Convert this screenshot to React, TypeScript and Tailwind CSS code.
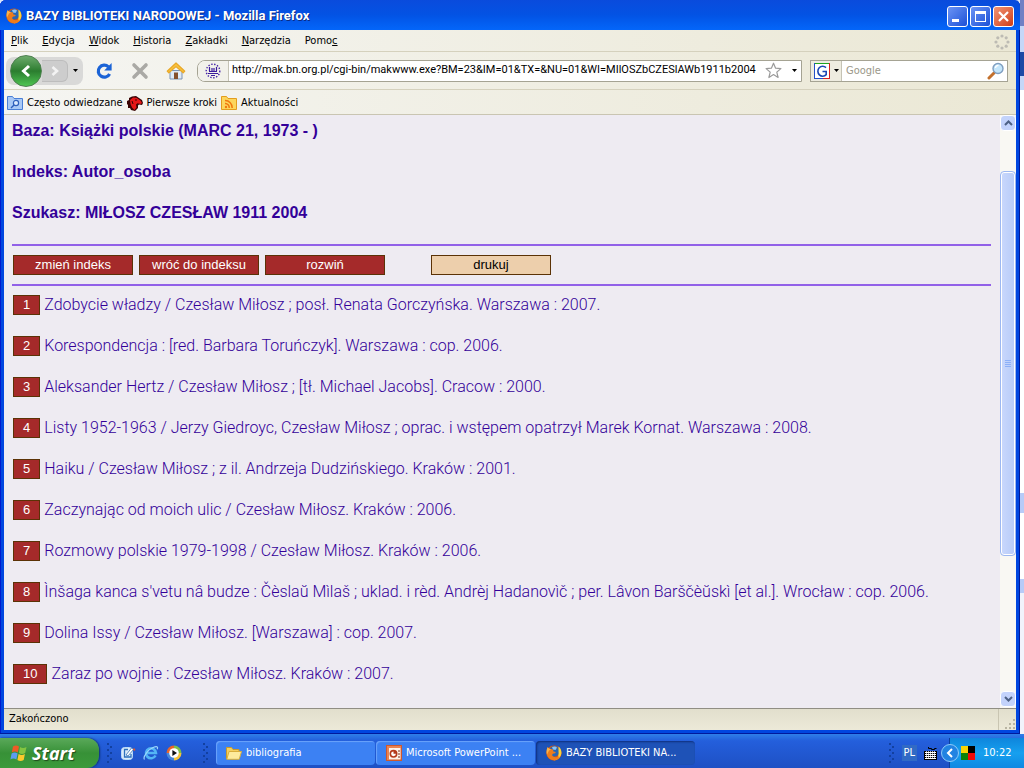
import React from 'react';

const menuItems = [
    { before: '', key: 'P', after: 'lik' },
    { before: '', key: 'E', after: 'dycja' },
    { before: '', key: 'W', after: 'idok' },
    { before: '', key: 'H', after: 'istoria' },
    { before: '', key: 'Z', after: 'akładki' },
    { before: '', key: 'N', after: 'arzędzia' },
    { before: 'Pomo', key: 'c', after: '' },
];

const books = [
    'Zdobycie władzy / Czesław Miłosz ; posł. Renata Gorczyńska. Warszawa : 2007.',
    'Korespondencja : [red. Barbara Toruńczyk]. Warszawa : cop. 2006.',
    'Aleksander Hertz / Czesław Miłosz ; [tł. Michael Jacobs]. Cracow : 2000.',
    'Listy 1952-1963 / Jerzy Giedroyc, Czesław Miłosz ; oprac. i wstępem opatrzył Marek Kornat. Warszawa : 2008.',
    'Haiku / Czesław Miłosz ; z il. Andrzeja Dudzińskiego. Kraków : 2001.',
    'Zaczynając od moich ulic / Czesław Miłosz. Kraków : 2006.',
    'Rozmowy polskie 1979-1998 / Czesław Miłosz. Kraków : 2006.',
    "Ìnšaga kanca s'vetu nâ budze : Čèslaŭ Mìlaš ; uklad. i rèd. Andrèj Hadanovìč ; per. Lâvon Barščèŭskì [et al.]. Wrocław : cop. 2006.",
    'Dolina Issy / Czesław Miłosz. [Warszawa] : cop. 2007.',
    'Zaraz po wojnie : Czesław Miłosz. Kraków : 2007.',
];

const FirefoxIcon = () => (
    <svg width="16" height="16" viewBox="0 0 16 16" className="shrink-0">
        <circle cx="8" cy="8" r="7.6" fill="#d9560e" />
        <circle cx="8.4" cy="6.2" r="5.2" fill="#2765b4" />
        <path d="M6 2c2-1 4-.6 5 .6L9.500 5 7 4.600z" fill="#8cc4f2" />
        <path d="M12.600 1.600c2.600 2 3.600 5.600 2.200 9-1.400 3-4.200 4.800-7.200 4.800 3.600-1.400 5.200-4 5-7.400-.1-2.400-.2-4.400 0-6.400z" fill="#fbd23a" />
        <path d="M1.600 2.200C.2 5 .2 9.200 1.800 11.800 3.600 14.600 7 15.800 10 15c2-.6 3-2 3.400-4-2.400 1.600-5.400 1.600-6.800 0-.8-1-.2-2.200 1-2.400l1.600-.4.6-1.200-2.400-.6-.4-2-2.200-.4L3 3.400z" fill="#ee7c1b" />
        <path d="M1.600 2.200C.4 4.600.4 7.600 1 9.600l2-4 2-1.200-2-1z" fill="#fbb44a" />
    </svg>
);

const StopIcon = () => (
    <svg width="18" height="18" viewBox="0 0 18 18">
        <path d="M3 3l12 12M15 3L3 15" stroke="#aaa9a5" strokeWidth="3.600" strokeLinecap="round" />
    </svg>
);

const ReloadIcon = () => (
    <svg width="18" height="18" viewBox="0 0 18 18">
        <path d="M13.400 4.800A6 6 0 1 0 14.600 12" fill="none" stroke="#1b63d6" strokeWidth="3.200" />
        <path d="M16.600 1v7.400H9.200z" fill="#1b63d6" />
    </svg>
);

const HomeIcon = () => (
    <svg width="20" height="18" viewBox="0 0 20 18">
        <path d="M4 8.500h12V17H4z" fill="#dfeaf6" stroke="#7b93b3" />
        <path d="M8 10.500h4V17H8z" fill="#85502c" />
        <path d="M10 1L1.200 9.200l1.600 1.600L10 4.600l7.200 6.200 1.600-1.600z" fill="#f9c23c" stroke="#e9a828" strokeWidth="1.200" strokeLinejoin="round" />
    </svg>
);

const LibraryIcon = () => (
    <svg width="16" height="16" viewBox="0 0 16 16">
        <circle cx="8" cy="8" r="6.800" fill="none" stroke="#4524a6" strokeWidth="1.400" strokeDasharray="1.400 1.600" />
        <path d="M4.500 4v4M7 5v3M9 5v3M11.500 4v4" stroke="#3a1a9c" strokeWidth="1.200" />
        <path d="M4 8.500h8M3 10.500h10M6 12.500h4" stroke="#3a1a9c" strokeWidth="1.200" />
    </svg>
);

const FolderSearchIcon = () => (
    <svg width="16" height="14" viewBox="0 0 16 14">
        <path d="M.5.500h5l1.500 2h8.500v11H.5z" fill="#a9c9f6" stroke="#4a7fd6" />
        <circle cx="9" cy="7" r="2.600" fill="#dcebff" stroke="#2e5fbb" strokeWidth="1.200" />
        <path d="M7 9l-3 3" stroke="#2e5fbb" strokeWidth="1.500" />
    </svg>
);

const DragonIcon = () => (
    <svg width="16" height="15" viewBox="0 0 16 15">
        <path d="M0 5l2-1 0-2 3-1.500 4-.5 3 2 3 2 1 3-1 2-3-.5-1 1 0 2.500-3 3-4-1-1-2-2 0 0-3-1-1z" fill="#3a0404" />
        <path d="M3 4l3-2.500 3.500.3 4 2.700 1.500 2.500-1.500 1-3-.8-1.500 1.300.5 3-2 2.500L5 11.500 3.500 8z" fill="#e51616" />
        <path d="M8 4h2M5 5l1 3" stroke="#3a0404" />
    </svg>
);

const FeedFolderIcon = () => (
    <svg width="16" height="14" viewBox="0 0 16 14">
        <path d="M.5.500h5l1.500 2h8.500v11H.5z" fill="#fcd65c" stroke="#e39d1d" />
        <circle cx="5" cy="11" r="1.200" fill="#f0780e" />
        <path d="M4 7.500A4 4 0 0 1 8.200 12M4 4.600A7 7 0 0 1 11.200 12" fill="none" stroke="#f0780e" strokeWidth="1.500" />
    </svg>
);

const ThrobberIcon = () => (
    <svg width="16" height="16" viewBox="0 0 16 16" className="shrink-0 fill-[#bdbbb3]">
        <circle cx="8" cy="2" r="1.600" />
        <circle cx="12.200" cy="3.800" r="1.600" />
        <circle cx="14" cy="8" r="1.600" />
        <circle cx="12.200" cy="12.200" r="1.600" />
        <circle cx="8" cy="14" r="1.600" />
        <circle cx="3.800" cy="12.200" r="1.600" />
        <circle cx="2" cy="8" r="1.600" />
        <circle cx="3.800" cy="3.800" r="1.600" />
    </svg>
);

const StarIcon = () => (
    <svg width="17" height="17" viewBox="0 0 17 17">
        <path d="M8.500 1.200l2.100 5 5.300.4-4.100 3.500 1.300 5.400-4.600-2.900-4.600 2.900 1.300-5.400L1.100 6.600l5.300-.4z" fill="#fff" stroke="#9b9b9b" strokeWidth="1.200" strokeLinejoin="round" />
    </svg>
);

const CaretIcon = () => (
    <svg width="5" height="3" viewBox="0 0 5 3">
        <path d="M0 0h5L2.500 3z" fill="#000" />
    </svg>
);

const GoogleIcon = () => (
    <svg width="16" height="16" viewBox="0 0 16 16">
        <path d="M0 0h16v16H0z" fill="#fff" />
        <path d="M0 .5h16" stroke="#1fa51f" />
        <path d="M.5 0v16M0 15.500h10" stroke="#2450c8" />
        <path d="M15.500 0v16M9 15.500h7" stroke="#d92020" />
        <path d="M12 4.600A4.800 5 0 1 0 12.200 11.600V8.500H8.500" fill="none" stroke="#1b48b5" strokeWidth="1.600" />
    </svg>
);

const MagnifierIcon = () => (
    <svg width="18" height="18" viewBox="0 0 18 18">
        <path d="M7 11l-5 5" stroke="#c3702c" strokeWidth="3" strokeLinecap="round" />
        <circle cx="11" cy="6.500" r="5" fill="#c4e6fb" stroke="#7f9ec0" strokeWidth="1.400" />
        <path d="M8.500 6a2.600 2.600 0 0 1 3-2.500" fill="none" stroke="#fff" strokeWidth="1.400" />
    </svg>
);

const WindowsFlag = () => (
    <svg width="18" height="18" viewBox="0 0 18 18">
        <path d="M3 2.500c2-1.300 4-1.300 6 0L7.800 8.400c-2-1.200-4-1.200-6 0z" fill="#ee5a26" />
        <path d="M10 3c2 1.300 4 1.300 6.500 0l-1.300 6c-2.200 1.200-4.200 1.200-6.300 0z" fill="#83c441" />
        <path d="M1.600 9.400c2-1.200 4-1.200 6 0l-1.200 6c-2-1.300-4-1.300-6 0z" fill="#5c9cf0" />
        <path d="M8.600 10c2 1.200 4.200 1.200 6.300 0l-1.200 6c-2.200 1.200-4.200 1.200-6.300 0z" fill="#fbc92c" />
    </svg>
);

const DesktopIcon = () => (
    <svg width="16" height="16" viewBox="0 0 16 16">
        <rect x="1.500" y="2.500" width="11" height="12" rx="3" fill="#dcecfb" stroke="#b9dbf8" />
        <path d="M8 4.500H4.500v7.500H11V9" fill="none" stroke="#2b70bd" strokeWidth="1.300" />
        <path d="M6 10l5.500-7 2 1.500L8 11z" fill="#fff" stroke="#3471b2" strokeWidth=".8" />
        <path d="M13 4l1.200-1 1.300 2-1.500 1z" fill="#e2582c" />
    </svg>
);

const ExplorerIcon = () => (
    <svg width="16" height="16" viewBox="0 0 16 16">
        <path d="M12.500 10.500A5 5 0 1 1 13 8H4.500" fill="none" stroke="#53b6f5" strokeWidth="2.600" />
        <path d="M1.500 14.500C-.5 12 5 4 12 1.800c2.500-.6 3 .4 2.200 2.400" fill="none" stroke="#9cd7fb" strokeWidth="1.200" />
    </svg>
);

const MediaIcon = () => (
    <svg width="16" height="16" viewBox="0 0 16 16">
        <path d="M8 8V.500A7.500 7.500 0 0 0 .5 8z" fill="#e9662b" />
        <path d="M8 8h7.500A7.500 7.500 0 0 0 8 .5z" fill="#7cc04a" />
        <path d="M8 8H.5A7.500 7.500 0 0 0 8 15.500z" fill="#4787db" />
        <path d="M8 8v7.500A7.500 7.500 0 0 0 15.500 8z" fill="#f3c23a" />
        <circle cx="8" cy="8" r="4.800" fill="#fff" />
        <path d="M6.400 5v6l4.600-3z" fill="#111" />
    </svg>
);

const FolderIcon = () => (
    <svg width="16" height="14" viewBox="0 0 16 14">
        <path d="M.5 13V1.500h5l1.500 2h6V6" fill="#f5cf5e" stroke="#c69a2c" />
        <path d="M.8 13.300L3 5.500h12.500l-2.300 7.800z" fill="#fdeb9d" stroke="#d8ae3c" />
    </svg>
);

const PowerPointIcon = () => (
    <svg width="16" height="16" viewBox="0 0 16 16">
        <path d="M.7.700h14.600v14.600H.7z" fill="#fff2e8" stroke="#d0582c" strokeWidth="1.400" />
        <path d="M1 1h14v2H1zM1 1h2v14H1z" fill="#e98454" />
        <circle cx="7.500" cy="8.800" r="3.200" fill="#fff" stroke="#b5391a" strokeWidth="1.600" />
        <path d="M7.500 8.800V5.600a3.200 3.200 0 0 1 3.200 3.200z" fill="#b5391a" />
        <path d="M12 6h2M12 9h2M12 12h2" stroke="#7c2c17" />
    </svg>
);

const KeyboardIcon = () => (
    <svg width="13" height="14" viewBox="0 0 13 14">
        <path d="M4.500 1v1.500h3v1h3v-1h2" fill="none" stroke="#000" />
        <path d="M1 5h12l-1 9H0z" fill="#fff" />
        <path d="M1 5.500h12M.5 13.500h12M1 7.500h11M1 9.500h11M1 11.500h11" stroke="#000" strokeDasharray="1.300 .7" />
        <path d="M.5 5v9M12.500 5v9M0 13.500h13" stroke="#000" />
    </svg>
);

const TrayColors = () => (
    <svg width="14" height="14" viewBox="0 0 14 14">
        <path d="M0 0h7v7H0z" fill="#f7d405" />
        <path d="M7 0h7v7H7z" fill="#000" />
        <path d="M0 7h7v7H0z" fill="#0a8208" />
        <path d="M7 7h7v7H7z" fill="#f00808" />
    </svg>
);

const Grip = () => (
    <svg width="6" height="20" viewBox="0 0 6 20" className="shrink-0 fill-[#1240a0]">
        <path d="M0 0h2v2H0zM3 3h2v2H3zM0 6h2v2H0zM3 9h2v2H3zM0 12h2v2H0zM3 15h2v2H3zM0 18h2v2H0z" />
    </svg>
);

const Chevron: React.FC<{ up?: boolean }> = ({ up }) => (
    <svg width="9" height="6" viewBox="0 0 9 6">
        <path d={up ? 'M1 5l3.500-3.500L8 5' : 'M1 1l3.500 3.500L8 1'} fill="none" stroke="#4d6185" strokeWidth="2" />
    </svg>
);

const TitleBar = () => (
    <header className="flex h-[30px] shrink-0 items-center gap-1 bg-linear-to-b from-[#0a4bdc] via-[#0353e4] to-[#0466fa] pt-0.5 pr-1.5 pl-1.5">
        <FirefoxIcon />
        <h1 className="flex-1 truncate font-[Roboto,sans-serif] text-[13px] font-bold text-white [text-shadow:1px_1px_0_#0b2a83]">
            BAZY BIBLIOTEKI NARODOWEJ - Mozilla Firefox
        </h1>
        <div className="flex gap-0.5">
            <button aria-label="Minimalizuj" className="flex size-[21px] items-end rounded-[3px] border border-white bg-linear-to-br from-[#6b93f5] to-[#1c4fd6] p-1">
                <span className="h-[3px] w-[7px] bg-white" />
            </button>
            <button aria-label="Maksymalizuj" className="flex size-[21px] items-center justify-center rounded-[3px] border border-white bg-linear-to-br from-[#6b93f5] to-[#1c4fd6]">
                <span className="size-[11px] border border-t-[3px] border-white" />
            </button>
            <button aria-label="Zamknij" className="flex size-[21px] items-center justify-center rounded-[3px] border border-white bg-linear-to-br from-[#f09373] to-[#cf3a0c]">
                <svg width="11" height="11" viewBox="0 0 11 11">
                    <path d="M1 1l9 9M10 1l-9 9" stroke="#fff" strokeWidth="2.200" />
                </svg>
            </button>
        </div>
    </header>
);

const NavBar = () => (
    <div className="flex h-[38px] shrink-0 items-center border-b border-[#d5d1bd] pr-2 pl-0.5">
        <div className="flex h-7 w-[77px] shrink-0 items-center rounded-lg bg-[#d9d9d8] pl-1">
            <button aria-label="Wstecz" className="flex size-8 shrink-0 items-center justify-center rounded-full border border-[#4d7f50] bg-linear-to-b from-[#6cab6c] via-[#2b7d2f] to-[#4ec552]">
                <svg width="12" height="14" viewBox="0 0 12 14">
                    <path d="M9 2L3.500 7 9 12" fill="none" stroke="#fff" strokeWidth="3" />
                </svg>
            </button>
            <button aria-label="Dalej" className="flex h-[22px] w-[26px] items-center justify-center rounded-r-md border border-l-0 border-[#bdbdbd] bg-[#cdcdcd]">
                <svg width="10" height="12" viewBox="0 0 10 12">
                    <path d="M2.500 2L7 6l-4.500 4" fill="none" stroke="#f3f3f3" strokeWidth="2.600" />
                </svg>
            </button>
            <button aria-label="Ostatnie strony" className="flex flex-1 justify-center">
                <CaretIcon />
            </button>
        </div>
        <button aria-label="Odśwież" className="ml-3 shrink-0"><ReloadIcon /></button>
        <button aria-label="Zatrzymaj" className="ml-[18px] shrink-0"><StopIcon /></button>
        <button aria-label="Strona startowa" className="ml-[17px] shrink-0"><HomeIcon /></button>
        <div className="ml-[11px] flex h-[22px] flex-1 items-center overflow-hidden rounded-l-lg border border-[#a5a393] bg-white">
            <span className="flex h-full w-[31px] shrink-0 items-center justify-center border-r border-[#c5c3b5] bg-[#f2f1ea]">
                <LibraryIcon />
            </span>
            <input
                aria-label="Adres"
                className="min-w-0 flex-1 pl-[3px] font-[Roboto,sans-serif] outline-none"
                defaultValue="http://mak.bn.org.pl/cgi-bin/makwww.exe?BM=23&IM=01&TX=&NU=01&WI=MIlOSZbCZESlAWb1911b2004"
            />
            <button aria-label="Dodaj zakładkę" className="px-2"><StarIcon /></button>
            <button aria-label="Pokaż historię" className="pr-1 pl-0.5"><CaretIcon /></button>
        </div>
        <div className="ml-2 flex h-[22px] w-[198px] shrink-0 items-center border border-[#a5a393] bg-white">
            <button aria-label="Wyszukiwarka" className="flex h-full w-[31px] shrink-0 items-center gap-1 border-r border-[#c5c3b5] bg-[#eeece0] pl-[3px]">
                <GoogleIcon />
                <CaretIcon />
            </button>
            <input aria-label="Szukaj" placeholder="Google" className="min-w-0 flex-1 pt-0.5 pl-1 outline-none placeholder:text-[#9a9789]" />
            <button aria-label="Szukaj" className="pr-0.5"><MagnifierIcon /></button>
        </div>
    </div>
);

const ScrollBar = () => (
    <div className="flex w-4 shrink-0 flex-col bg-[#f9f8f3] pb-px">
        <button aria-label="W górę" className="flex h-4 items-center justify-center rounded-sm border border-white bg-[#c3d3fb]"><Chevron up /></button>
        <div className="grow-[40] basis-0" />
        <div className="flex grow-[385] basis-0 flex-col items-center justify-center gap-px rounded-sm border border-[#9db8f0] bg-linear-to-r from-[#c9d8fc] to-[#b7cbf8] inset-ring inset-ring-white">
            <span className="h-px w-1.5 bg-[#8cb0f8]" />
            <span className="h-px w-1.5 bg-[#8cb0f8]" />
            <span className="h-px w-1.5 bg-[#8cb0f8]" />
            <span className="h-px w-1.5 bg-[#8cb0f8]" />
        </div>
        <div className="grow-[136] basis-0" />
        <button aria-label="W dół" className="flex h-4 items-center justify-center rounded-sm border border-white bg-[#c3d3fb]"><Chevron /></button>
    </div>
);

const Catalogue = () => (
    <main className="min-w-0 flex-1 overflow-hidden bg-[#eeebf2] pt-1.5 pr-[9px] pl-2 text-base leading-5 text-[#330099]">
        <div className="flex flex-col gap-[21px] font-['Liberation_Sans',Arial,sans-serif] font-bold">
            <h2>Baza: Książki polskie (MARC 21, 1973 - )</h2>
            <h2>Indeks: Autor_osoba</h2>
            <h2>Szukasz: MIŁOSZ CZESŁAW 1911 2004</h2>
        </div>
        <div className="mt-[21px] flex gap-1.5 border-y-2 border-[#9160e8] py-[9px] pl-px font-['Liberation_Sans',Arial,sans-serif] text-[13px] leading-[18px] text-white">
            <button className="h-5 w-[120px] border border-[#5b3206] bg-[#a52a2a]">zmień indeks</button>
            <button className="h-5 w-[120px] border border-[#5b3206] bg-[#a52a2a]">wróć do indeksu</button>
            <button className="h-5 w-[120px] border border-[#5b3206] bg-[#a52a2a]">rozwiń</button>
            <button className="ml-10 h-5 w-[120px] border border-[#5b3206] bg-[#edcfac] text-black">drukuj</button>
        </div>
        <ol className="mt-[9px] flex flex-col gap-[21px] pl-px font-[Roboto,Arial,sans-serif] font-light">
            {books.map((book, i) => (
                <li key={book} className="flex h-5 gap-1 whitespace-nowrap">
                    <button className="border border-[#5b3206] bg-[#a52a2a] px-[9px] font-['Liberation_Sans',Arial,sans-serif] text-[13px] leading-[18px] text-white">{i + 1}</button>
                    <span>{book}</span>
                </li>
            ))}
        </ol>
    </main>
);

const Taskbar = () => (
    <footer className="flex h-[34px] shrink-0 bg-linear-to-b from-[#2f7fe8] via-[#245fdc] via-20% to-[#1e50c4] pt-1 text-[11px] text-white">
        <button className="flex w-[99px] shrink-0 items-center gap-1 rounded-r-xl bg-linear-to-b from-[#5aa95a] via-[#379137] to-[#3c9a3b] pl-2.5 font-['Open_Sans',sans-serif] text-lg leading-5 font-bold italic shadow-[1px_0_2px_#0f2f70] [text-shadow:1px_1px_1px_#1e4a1c]">
            <WindowsFlag />
            Start
        </button>
        <div className="flex w-[117px] shrink-0 items-center gap-[7px] pl-2">
            <Grip />
            <button aria-label="Pulpit"><DesktopIcon /></button>
            <button aria-label="Internet Explorer"><ExplorerIcon /></button>
            <button aria-label="Windows Media Player"><MediaIcon /></button>
            <span className="ml-3.5"><Grip /></span>
        </div>
        <div className="flex flex-1 gap-px py-[3px]">
            <button className="flex w-[159px] items-center gap-1 rounded-sm bg-[#3c81f3] pl-2.5 inset-shadow-[1px_1px_1px_#6ba3fb]"><FolderIcon />bibliografia</button>
            <button className="flex w-[159px] items-center gap-1 rounded-sm bg-[#3c81f3] pl-2.5 inset-shadow-[1px_1px_1px_#6ba3fb]"><PowerPointIcon />Microsoft PowerPoint ...</button>
            <button className="flex w-[159px] items-center gap-1 rounded-sm bg-[#1e52b7] pl-2.5 inset-shadow-[1px_1px_2px_#0f2f7c]"><FirefoxIcon />BAZY BIBLIOTEKI NA...</button>
        </div>
        <div className="flex items-center gap-[7px] pr-3">
            <Grip />
            <span className="bg-[#316ac5] px-0.5">PL</span>
            <KeyboardIcon />
        </div>
        <div className="relative flex w-[75px] shrink-0 items-center gap-2 border-l border-[#0a3f9e] bg-linear-to-b from-[#0f85dc] via-[#16a0ef] to-[#1088e2] pl-[11px]">
            <button aria-label="Pokaż ukryte ikony" className="absolute -left-[9px] flex size-[18px] items-center justify-center rounded-full border border-[#8ecbf8] bg-[#2183e2]">
                <svg width="8" height="10" viewBox="0 0 8 10">
                    <path d="M6 1L2 5l4 4" fill="none" stroke="#fff" strokeWidth="2" />
                </svg>
            </button>
            <TrayColors />
            <time>10:22</time>
        </div>
    </footer>
);

const App: React.FC = () => {
    return (
        <div className="flex h-screen flex-col overflow-hidden bg-[#dbe6fa] font-['DejaVu_Sans_Condensed','DejaVu_Sans',sans-serif] text-[11px] text-black">
            <div className="flex min-h-0 flex-1">
                {/* Okno przeglądarki */}
                <div className="flex min-w-0 flex-1 flex-col overflow-hidden rounded-t-md bg-[#0046e0] shadow-[inset_-1px_-1px_0_#001a9c,inset_1px_0_0_#0019cf]">
                    <TitleBar />
                    <div className="mx-1 flex min-h-0 flex-1 flex-col bg-linear-to-r from-[#f5f5f2] to-[#ebe8d5]">
                        <nav className="flex h-[22px] shrink-0 items-center gap-3.5 border-b border-[#d5d1bd] pt-0.5 pr-1.5 pl-[7px]">
                            {menuItems.map(({ before, key, after }) => (
                                <button key={key}>
                                    {before}<span className="underline">{key}</span>{after}
                                </button>
                            ))}
                            <span className="ml-auto"><ThrobberIcon /></span>
                        </nav>
                        <NavBar />
                        <div className="flex h-[25px] shrink-0 items-center gap-1 border-b border-[#c9c5b2] pt-0.5 pl-[3px]">
                            <a href="#czesto" className="flex items-center gap-1"><FolderSearchIcon />Często odwiedzane</a>
                            <a href="#kroki" className="flex items-center gap-1"><DragonIcon />Pierwsze kroki</a>
                            <a href="#aktualnosci" className="flex items-center gap-1"><FeedFolderIcon />Aktualności</a>
                        </div>
                        <div className="flex min-h-0 flex-1">
                            <Catalogue />
                            <ScrollBar />
                        </div>
                        <div className="flex h-[22px] shrink-0 items-center border-t border-[#908e84] bg-linear-to-b from-[#e2dfcd] to-[#ece9d8] pl-[5px]">
                            <span className="flex-1">Zakończono</span>
                            <span className="flex h-full w-[18px] items-end justify-end border-l border-[#c9c5b2]">
                                <svg width="12" height="12" viewBox="0 0 12 12" className="fill-[#b8b4a2]">
                                    <path d="M9 1h2v2H9zM9 5h2v2H9zM9 9h2v2H9zM5 5h2v2H5zM5 9h2v2H5zM1 9h2v2H1z" />
                                </svg>
                            </span>
                        </div>
                    </div>
                    <div className="h-1 shrink-0 border-b border-[#001a9c]" />
                </div>
                {/* Skrawek okna w tle */}
                <div className="flex w-1 shrink-0 flex-col">
                    <div className="h-[26px] bg-[#7080c4]" />
                    <div className="h-[26px] bg-[#c5d7f8]" />
                    <div className="h-[24px] bg-[#1c4aa5]" />
                    <div className="h-[14px] bg-[#c5d7f8]" />
                    <div className="flex-[400] bg-white" />
                    <div className="h-[20px] bg-[#b7cbf8]" />
                    <div className="flex-[66] bg-white" />
                    <div className="h-[14px] bg-[#b7cbf8]" />
                    <div className="flex-[140] bg-[#f1f3fb]" />
                </div>
            </div>
            <Taskbar />
        </div>
    );
};

export default App;
